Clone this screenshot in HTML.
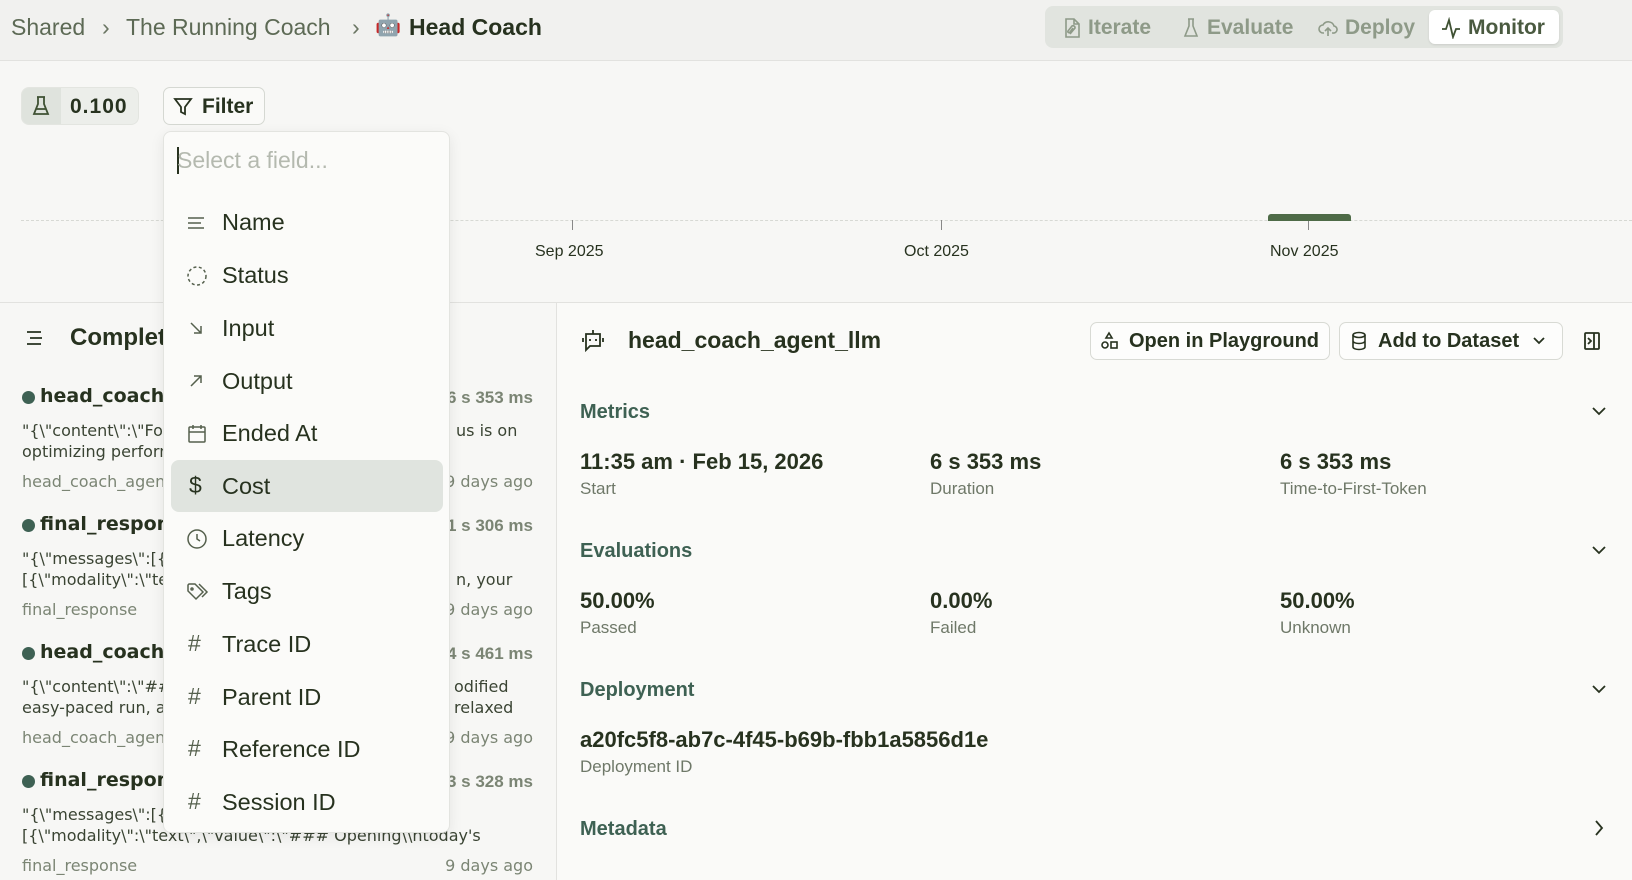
<!DOCTYPE html>
<html><head><meta charset="utf-8"><style>
*{box-sizing:border-box;margin:0;padding:0}
body{width:1632px;height:880px;overflow:hidden;background:#f1f1ef;font-family:"Liberation Sans",sans-serif;color:#27321f;position:relative}
.a{position:absolute;white-space:nowrap}
svg{display:block}
.hdr{top:14px;font-size:23px;color:#5d6a55}
.main{left:0;top:60px;width:1632px;height:820px;background:#f7f7f5;border-top:1px solid #e2e2df}
.tabs{left:1045px;top:6px;width:518px;height:42px;background:#e1e4df;border-radius:8px}
.tab{top:16px;font-size:21px;font-weight:bold;color:#8e9a88}
.tl{font-size:16px;color:#27321f;top:243px}
.left{left:0;top:302px;width:557px;height:578px;border-right:1px solid #e2e2df;border-top:1px solid #e2e2df;background:#f7f7f5}
.right{left:557px;top:302px;width:1075px;height:578px;background:#fafaf8;border-top:1px solid #e2e2df}
.it{font-family:"DejaVu Sans",sans-serif;font-size:19px;font-weight:bold;color:#27321f}
.ds{font-family:"DejaVu Sans",sans-serif;font-size:16px;color:#3a4433;line-height:21px}
.mt{font-family:"DejaVu Sans",sans-serif;font-size:16px;color:#7b8574}
.tm{font-size:17px;font-weight:bold;color:#7b8574}
.dd{left:163px;top:131px;width:287px;height:702px;background:#fbfbf9;border:1px solid #e3e4e0;border-radius:8px;box-shadow:0 4px 14px rgba(0,0,0,.08)}
.di{left:222px;font-size:23.5px;color:#27321f}
.ic{left:186px}
.sec{left:580px;font-size:20px;font-weight:bold;color:#3e6153}
.val{font-size:22px;font-weight:bold;color:#27321f}
.lb{font-size:17px;color:#6e7868}
.btn{top:322px;height:38px;border:1px solid #d8dad4;border-radius:7px;background:#fdfdfc;font-size:20px;font-weight:bold;padding:7px 0 0 38px}
</style></head><body>

<div class="a hdr" style="left:11px">Shared</div>
<div class="a hdr" style="left:102px;color:#6a7562">›</div>
<div class="a hdr" style="left:126px">The Running Coach</div>
<div class="a hdr" style="left:352px;color:#6a7562">›</div>
<div class="a" style="left:375px;top:14px;font-size:21px">🤖</div>
<div class="a hdr" style="left:409px;font-weight:bold;color:#27321f">Head Coach</div>

<div class="a tabs"></div>
<div class="a" style="left:1429px;top:10px;width:130px;height:34px;background:#fff;border-radius:6px;box-shadow:0 1px 2px rgba(0,0,0,.1)"></div>
<svg class="a" style="left:1063px;top:17px" width="18" height="22" viewBox="0 0 18 22" fill="none" stroke="#8e9a88" stroke-width="1.6"><path d="M3 2h8l5 5v13H3z M11 2v5h5 M7 17l5-6a2 2 0 0 0-3-2l-4 5a1 1 0 0 0 2 1l3-4"/></svg>
<div class="a tab" style="left:1088px">Iterate</div>
<svg class="a" style="left:1182px;top:17px" width="18" height="22" viewBox="0 0 18 22" fill="none" stroke="#8e9a88" stroke-width="1.6"><path d="M6 2h6M7 2v7L3 19h12L11 9V2"/></svg>
<div class="a tab" style="left:1207px">Evaluate</div>
<svg class="a" style="left:1318px;top:18px" width="20" height="20" viewBox="0 0 20 20" fill="none" stroke="#8e9a88" stroke-width="1.6"><path d="M6 15H5a4 4 0 0 1 0-8 6 6 0 0 1 11 1 3.5 3.5 0 0 1-1 7h-1 M10 18v-8 M7 13l3-3 3 3"/></svg>
<div class="a tab" style="left:1345px">Deploy</div>
<svg class="a" style="left:1441px;top:17px" width="20" height="22" viewBox="0 0 20 22" fill="none" stroke="#3f5133" stroke-width="1.8"><path d="M1 12h4l3-9 4 17 3-8h4"/></svg>
<div class="a tab" style="left:1468px;color:#4a5a40">Monitor</div>

<div class="a main"></div>
<div class="a" style="left:21px;top:87px;width:118px;height:38px;background:#eceeea;border:1px solid #e3e5e0;border-radius:8px"></div>
<div class="a" style="left:22px;top:88px;width:39px;height:36px;background:#dfe3dd;border-radius:7px 0 0 7px"></div>
<svg class="a" style="left:32px;top:95px" width="18" height="22" viewBox="0 0 18 22" fill="none" stroke="#3f5133" stroke-width="1.8"><path d="M5 2h8M6 2v7L2 19h14L12 9V2 M4 14h10"/></svg>
<div class="a" style="left:70px;top:95px;font-size:21px;font-weight:bold;letter-spacing:1px">0.100</div>
<div class="a" style="left:163px;top:87px;width:102px;height:38px;border:1px solid #d5d8d2;border-radius:7px;background:#fafaf8"></div>
<svg class="a" style="left:173px;top:96px" width="20" height="20" viewBox="0 0 20 20" fill="none" stroke="#27321f" stroke-width="1.8"><path d="M2 3h16l-6 8v7l-4-2v-5z"/></svg>
<div class="a" style="left:202px;top:95px;font-size:21px;font-weight:bold">Filter</div>

<div class="a" style="left:21px;top:220px;width:1611px;border-top:1px dashed #d7d9d4"></div>
<div class="a" style="left:572px;top:220px;height:10px;border-left:1px solid #888"></div>
<div class="a" style="left:941px;top:220px;height:10px;border-left:1px solid #888"></div>
<div class="a" style="left:1308px;top:220px;height:10px;border-left:1px solid #888"></div>
<div class="a" style="left:1268px;top:214px;width:83px;height:7px;background:#4e6b47;border-radius:3px 3px 0 0"></div>
<div class="a tl" style="left:535px">Sep 2025</div>
<div class="a tl" style="left:904px">Oct 2025</div>
<div class="a tl" style="left:1270px">Nov 2025</div>

<div class="a left"></div>
<svg class="a" style="left:25px;top:329px" width="20" height="18" viewBox="0 0 20 18" fill="none" stroke="#27321f" stroke-width="1.8"><path d="M2 3h14M5 9h12M2 15h14"/></svg>
<div class="a" style="left:70px;top:324px;font-size:24px;font-weight:bold">Completions</div>

<div class="a" style="left:22px;top:391px;width:13px;height:13px;border-radius:50%;background:#3e6153"></div>
<div class="a it" style="left:40px;top:385px">head_coach_agent_llm</div>
<div class="a tm" style="left:430px;top:388px;width:103px;text-align:right">6 s 353 ms</div>
<div class="a ds" style="left:22px;top:420px">"{\"content\":\"Focus for today<br>optimizing performance</div>
<div class="a ds" style="left:456px;top:420px">us is on</div>
<div class="a mt" style="left:22px;top:472px">head_coach_agent</div><div class="a mt" style="left:423px;top:472px;width:110px;text-align:right">9 days ago</div>

<div class="a" style="left:22px;top:519px;width:13px;height:13px;border-radius:50%;background:#3e6153"></div>
<div class="a it" style="left:40px;top:513px">final_response</div>
<div class="a tm" style="left:430px;top:516px;width:103px;text-align:right">1 s 306 ms</div>
<div class="a ds" style="left:22px;top:548px">"{\"messages\":[{<br>[{\"modality\":\"text\"</div>
<div class="a ds" style="left:456px;top:569px">n, your</div>
<div class="a mt" style="left:22px;top:600px">final_response</div><div class="a mt" style="left:423px;top:600px;width:110px;text-align:right">9 days ago</div>

<div class="a" style="left:22px;top:647px;width:13px;height:13px;border-radius:50%;background:#3e6153"></div>
<div class="a it" style="left:40px;top:641px">head_coach_agent_llm</div>
<div class="a tm" style="left:430px;top:644px;width:103px;text-align:right">4 s 461 ms</div>
<div class="a ds" style="left:22px;top:676px">"{\"content\":\"####<br>easy-paced run, a</div>
<div class="a ds" style="left:454px;top:676px;line-height:21px">odified<br>relaxed</div>
<div class="a mt" style="left:22px;top:728px">head_coach_agent</div><div class="a mt" style="left:423px;top:728px;width:110px;text-align:right">9 days ago</div>

<div class="a" style="left:22px;top:775px;width:13px;height:13px;border-radius:50%;background:#3e6153"></div>
<div class="a it" style="left:40px;top:769px">final_response</div>
<div class="a tm" style="left:430px;top:772px;width:103px;text-align:right">3 s 328 ms</div>
<div class="a ds" style="left:22px;top:804px">"{\"messages\":[{<br>[{\"modality\":\"text\",\"value\":\"### Opening\\ntoday's</div>
<div class="a mt" style="left:22px;top:856px">final_response</div><div class="a mt" style="left:423px;top:856px;width:110px;text-align:right">9 days ago</div>

<div class="a right"></div>
<svg class="a" style="left:582px;top:328px" width="22" height="24" viewBox="0 0 22 24" fill="none" stroke="#27321f" stroke-width="1.8"><path d="M11 2v4 M4 6h14v12H8l-4 4z M8 11v2 M14 11v2 M1 10v4 M21 10v4"/></svg>
<div class="a" style="left:628px;top:327px;font-size:23px;font-weight:bold">head_coach_agent_llm</div>
<div class="a btn" style="left:1090px;width:240px">Open in Playground</div>
<svg class="a" style="left:1100px;top:331px" width="18" height="20" viewBox="0 0 18 20" fill="none" stroke="#27321f" stroke-width="1.6"><path d="M9 2l3 5H6z"/><circle cx="5" cy="14" r="3"/><rect x="11" y="11" width="6" height="6"/></svg>
<div class="a btn" style="left:1339px;width:224px">Add to Dataset</div>
<svg class="a" style="left:1350px;top:331px" width="18" height="20" viewBox="0 0 18 20" fill="none" stroke="#27321f" stroke-width="1.6"><ellipse cx="9" cy="4" rx="6" ry="2.5"/><path d="M3 4v12c0 1.5 3 2.5 6 2.5s6-1 6-2.5V4 M3 10c0 1.5 3 2.5 6 2.5s6-1 6-2.5"/></svg>
<svg class="a" style="left:1532px;top:335px" width="14" height="12" viewBox="0 0 14 12" fill="none" stroke="#27321f" stroke-width="1.8"><path d="M2 3l5 5 5-5"/></svg>
<svg class="a" style="left:1583px;top:331px" width="18" height="20" viewBox="0 0 18 20" fill="none" stroke="#27321f" stroke-width="1.8"><rect x="2" y="2" width="14" height="16" rx="1"/><path d="M11 2v16 M5 7l3 3-3 3"/></svg>

<div class="a sec" style="top:401px">Metrics</div>
<div class="a sec" style="top:540px">Evaluations</div>
<div class="a sec" style="top:679px">Deployment</div>
<div class="a sec" style="top:818px">Metadata</div>
<svg class="a" style="left:1591px;top:405px" width="16" height="12" viewBox="0 0 16 12" fill="none" stroke="#27321f" stroke-width="1.8"><path d="M2 3l6 6 6-6"/></svg>
<svg class="a" style="left:1591px;top:544px" width="16" height="12" viewBox="0 0 16 12" fill="none" stroke="#27321f" stroke-width="1.8"><path d="M2 3l6 6 6-6"/></svg>
<svg class="a" style="left:1591px;top:683px" width="16" height="12" viewBox="0 0 16 12" fill="none" stroke="#27321f" stroke-width="1.8"><path d="M2 3l6 6 6-6"/></svg>
<svg class="a" style="left:1593px;top:819px" width="12" height="18" viewBox="0 0 12 18" fill="none" stroke="#27321f" stroke-width="1.8"><path d="M3 2l6 7-6 7"/></svg>

<div class="a val" style="left:580px;top:449px">11:35 am · Feb 15, 2026</div>
<div class="a lb" style="left:580px;top:479px">Start</div>
<div class="a val" style="left:930px;top:449px">6 s 353 ms</div>
<div class="a lb" style="left:930px;top:479px">Duration</div>
<div class="a val" style="left:1280px;top:449px">6 s 353 ms</div>
<div class="a lb" style="left:1280px;top:479px">Time-to-First-Token</div>

<div class="a val" style="left:580px;top:588px">50.00%</div>
<div class="a lb" style="left:580px;top:618px">Passed</div>
<div class="a val" style="left:930px;top:588px">0.00%</div>
<div class="a lb" style="left:930px;top:618px">Failed</div>
<div class="a val" style="left:1280px;top:588px">50.00%</div>
<div class="a lb" style="left:1280px;top:618px">Unknown</div>

<div class="a val" style="left:580px;top:727px">a20fc5f8-ab7c-4f45-b69b-fbb1a5856d1e</div>
<div class="a lb" style="left:580px;top:757px">Deployment ID</div>

<div class="a dd"></div>
<div class="a" style="left:177px;top:147px;height:27px;border-left:2px solid #27321f"></div>
<div class="a" style="left:177px;top:147px;font-size:23px;color:#b4b9af">Select a field...</div>
<div class="a" style="left:171px;top:460px;width:272px;height:52px;background:#e0e4df;border-radius:8px"></div>

<svg class="a ic" style="top:213px" width="20" height="20" viewBox="0 0 20 20" fill="none" stroke="#55604d" stroke-width="1.5"><path d="M2 5h16M2 10h13M2 15h16"/></svg>
<div class="a di" style="top:209px">Name</div>
<svg class="a ic" style="top:265px" width="22" height="22" viewBox="0 0 22 22" fill="none" stroke="#55604d" stroke-width="1.5" stroke-dasharray="3 2.5"><circle cx="11" cy="11" r="9"/></svg>
<div class="a di" style="top:262px">Status</div>
<svg class="a ic" style="top:318px" width="20" height="20" viewBox="0 0 20 20" fill="none" stroke="#55604d" stroke-width="1.5"><path d="M5 5l10 10M15 8v7H8"/></svg>
<div class="a di" style="top:315px">Input</div>
<svg class="a ic" style="top:371px" width="20" height="20" viewBox="0 0 20 20" fill="none" stroke="#55604d" stroke-width="1.5"><path d="M5 15L15 5M8 5h7v7"/></svg>
<div class="a di" style="top:368px">Output</div>
<svg class="a ic" style="top:423px" width="22" height="22" viewBox="0 0 22 22" fill="none" stroke="#55604d" stroke-width="1.5"><rect x="3" y="4" width="16" height="15" rx="1"/><path d="M3 9h16M7 2v4M15 2v4"/></svg>
<div class="a di" style="top:420px">Ended At</div>
<div class="a" style="left:189px;top:472px;font-size:23px;color:#27321f">$</div>
<div class="a di" style="top:473px">Cost</div>
<svg class="a ic" style="top:528px" width="22" height="22" viewBox="0 0 22 22" fill="none" stroke="#55604d" stroke-width="1.5"><circle cx="11" cy="11" r="9"/><path d="M11 6v5l3 2"/></svg>
<div class="a di" style="top:525px">Latency</div>
<svg class="a ic" style="top:581px" width="24" height="22" viewBox="0 0 24 22" fill="none" stroke="#55604d" stroke-width="1.5"><path d="M2 4v6l8 8 7-7-8-8H3z M13 3l8 8-5 5"/><circle cx="6" cy="8" r="1"/></svg>
<div class="a di" style="top:578px">Tags</div>
<div class="a" style="left:188px;top:630px;font-size:23px;color:#55604d">#</div>
<div class="a di" style="top:631px">Trace ID</div>
<div class="a" style="left:188px;top:683px;font-size:23px;color:#55604d">#</div>
<div class="a di" style="top:684px">Parent ID</div>
<div class="a" style="left:188px;top:735px;font-size:23px;color:#55604d">#</div>
<div class="a di" style="top:736px">Reference ID</div>
<div class="a" style="left:188px;top:788px;font-size:23px;color:#55604d">#</div>
<div class="a di" style="top:789px">Session ID</div>
</body></html>
